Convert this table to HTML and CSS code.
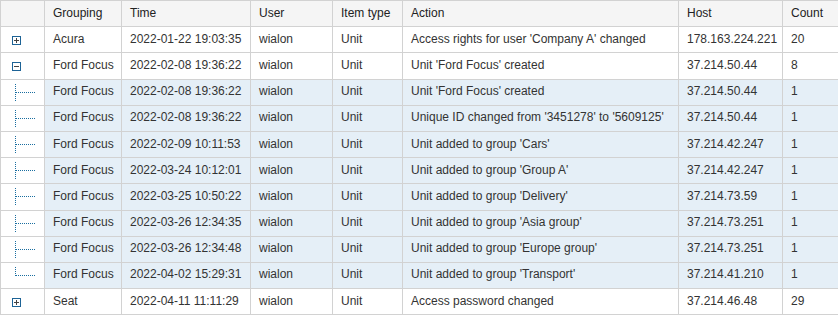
FILE: index.html
```html
<!DOCTYPE html>
<html lang="en">
<head>
    <meta charset="UTF-8">
    <title>Unit history</title>
    <link rel="stylesheet" href="styles.css">
</head>
<body>
    <table class="log-table">
        <colgroup>
            <col class="c-tree">
            <col class="c-group">
            <col class="c-time">
            <col class="c-user">
            <col class="c-type">
            <col class="c-action">
            <col class="c-host">
            <col class="c-count">
        </colgroup>
        <thead>
            <tr>
                <th></th>
                <th>Grouping</th>
                <th>Time</th>
                <th>User</th>
                <th>Item type</th>
                <th>Action</th>
                <th>Host</th>
                <th>Count</th>
            </tr>
        </thead>
        <tbody>
            <tr class="group">
                <td class="tree"><span class="toggle plus"></span></td>
                <td>Acura</td>
                <td>2022-01-22 19:03:35</td>
                <td>wialon</td>
                <td>Unit</td>
                <td>Access rights for user 'Company A' changed</td>
                <td>178.163.224.221</td>
                <td>20</td>
            </tr>
            <tr class="group">
                <td class="tree"><span class="toggle minus"></span></td>
                <td>Ford Focus</td>
                <td>2022-02-08 19:36:22</td>
                <td>wialon</td>
                <td>Unit</td>
                <td>Unit 'Ford Focus' created</td>
                <td>37.214.50.44</td>
                <td>8</td>
            </tr>
            <tr class="child">
                <td class="tree"><span class="branch"></span></td>
                <td>Ford Focus</td>
                <td>2022-02-08 19:36:22</td>
                <td>wialon</td>
                <td>Unit</td>
                <td>Unit 'Ford Focus' created</td>
                <td>37.214.50.44</td>
                <td>1</td>
            </tr>
            <tr class="child">
                <td class="tree"><span class="branch"></span></td>
                <td>Ford Focus</td>
                <td>2022-02-08 19:36:22</td>
                <td>wialon</td>
                <td>Unit</td>
                <td>Unique ID changed from '3451278' to '5609125'</td>
                <td>37.214.50.44</td>
                <td>1</td>
            </tr>
            <tr class="child">
                <td class="tree"><span class="branch"></span></td>
                <td>Ford Focus</td>
                <td>2022-02-09 10:11:53</td>
                <td>wialon</td>
                <td>Unit</td>
                <td>Unit added to group 'Cars'</td>
                <td>37.214.42.247</td>
                <td>1</td>
            </tr>
            <tr class="child">
                <td class="tree"><span class="branch"></span></td>
                <td>Ford Focus</td>
                <td>2022-03-24 10:12:01</td>
                <td>wialon</td>
                <td>Unit</td>
                <td>Unit added to group 'Group A'</td>
                <td>37.214.42.247</td>
                <td>1</td>
            </tr>
            <tr class="child">
                <td class="tree"><span class="branch"></span></td>
                <td>Ford Focus</td>
                <td>2022-03-25 10:50:22</td>
                <td>wialon</td>
                <td>Unit</td>
                <td>Unit added to group 'Delivery'</td>
                <td>37.214.73.59</td>
                <td>1</td>
            </tr>
            <tr class="child">
                <td class="tree"><span class="branch"></span></td>
                <td>Ford Focus</td>
                <td>2022-03-26 12:34:35</td>
                <td>wialon</td>
                <td>Unit</td>
                <td>Unit added to group 'Asia group'</td>
                <td>37.214.73.251</td>
                <td>1</td>
            </tr>
            <tr class="child">
                <td class="tree"><span class="branch"></span></td>
                <td>Ford Focus</td>
                <td>2022-03-26 12:34:48</td>
                <td>wialon</td>
                <td>Unit</td>
                <td>Unit added to group 'Europe group'</td>
                <td>37.214.73.251</td>
                <td>1</td>
            </tr>
            <tr class="child">
                <td class="tree"><span class="branch last"></span></td>
                <td>Ford Focus</td>
                <td>2022-04-02 15:29:31</td>
                <td>wialon</td>
                <td>Unit</td>
                <td>Unit added to group 'Transport'</td>
                <td>37.214.41.210</td>
                <td>1</td>
            </tr>
            <tr class="group">
                <td class="tree"><span class="toggle plus"></span></td>
                <td>Seat</td>
                <td>2022-04-11 11:11:29</td>
                <td>wialon</td>
                <td>Unit</td>
                <td>Access password changed</td>
                <td>37.214.46.48</td>
                <td>29</td>
            </tr>
        </tbody>
    </table>
</body>
</html>
```

FILE: styles.css
```css
body {
    margin: 0;
    font-family: "Liberation Sans", Arial, sans-serif;
    font-size: 12px;
    color: #333;
    background: #fff;
}
.log-table {
    border-collapse: collapse;
    table-layout: fixed;
    width: 838px;
}
.c-tree { width: 44px; }
.c-group { width: 77px; }
.c-time { width: 129px; }
.c-user { width: 82px; }
.c-type { width: 70px; }
.c-action { width: 276px; }
.c-host { width: 104px; }
.c-count { width: 56px; }
.log-table th,
.log-table td {
    border: 1px solid #d2d2d2;
    height: 23.2px;
    padding: 0 8px 2px;
    text-align: left;
    white-space: nowrap;
    overflow: hidden;
}
.log-table th {
    background: #f5f5f5;
    font-weight: normal;
    color: #222;
}
.child td {
    background: #e5eff7;
}
.child td.tree {
    background: #fff;
}
.tree {
    position: relative;
}
.toggle {
    position: absolute;
    left: 11px;
    top: 9px;
    width: 7px;
    height: 7px;
    border: 1px solid #1d6396;
}
.toggle::before,
.toggle::after {
    content: "";
    position: absolute;
    background: #444;
}
.toggle::before {
    left: 1px;
    top: 3px;
    width: 5px;
    height: 1px;
}
.plus::after {
    left: 3px;
    top: 1px;
    width: 1px;
    height: 5px;
}
.branch {
    position: absolute;
    left: 14px;
    top: 4px;
    width: 20px;
    height: 17px;
    border-left: 1px dotted #1a6ea0;
}
.branch::after {
    content: "";
    position: absolute;
    left: 0;
    top: 8px;
    width: 19px;
    border-top: 1px dotted #1a6ea0;
}
.branch.last {
    height: 9px;
}
```
